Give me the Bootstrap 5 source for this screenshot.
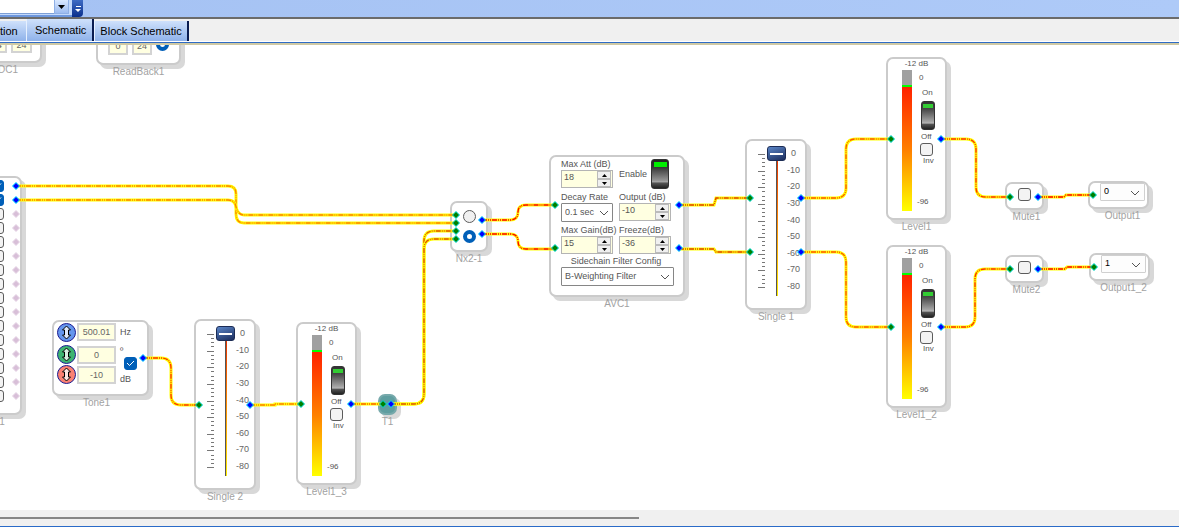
<!DOCTYPE html>
<html lang="en">
<head>
<meta charset="utf-8">
<meta name="viewport" content="width=device-width, initial-scale=1">
<title>Schematic</title>
<link href="https://cdn.jsdelivr.net/npm/bootstrap@5.3.0/dist/css/bootstrap.min.css" rel="stylesheet">
<style>
body{font-family:"Liberation Sans",Arial,sans-serif;font-size:9px;line-height:11px;color:#555;background:#fff}
button,input,select{font-family:inherit;font-size:9px;line-height:11px;color:#555}
/* toolbar and tabs */
.toolstrip{height:17px;background:linear-gradient(90deg,#a5c2f3,#aecaf8)}
.toolstrip .combo-wrap{width:72px;background:#c3d9fb;border-bottom:2px solid #6d97dd}
.combo-text{width:54px;height:14px;border:0;background:#fff;border-bottom:1px solid #7d9fd6}
.combo-btn{width:15px;height:14px;background:linear-gradient(#d9e8ff,#9dbcf0);border:1px solid #8fb0e6;border-top:0}
.more-btn{width:11px;background:linear-gradient(#3f6cc4,#0a2f8c);border:0;border-radius:0 0 4px 0}
.tabbar{height:25px;background:#f0f0f0;border-top:2px solid #6b6b6b;border-bottom:1px solid #fff}
.tab-item{height:20px;line-height:20px;font-size:11px;color:#000;background:linear-gradient(#cfe1fb,#8fb2ea);border:0;border-right:2px solid #0a1c50;border-left:1px solid #e6f0ff;border-radius:0;padding:0 5px}
.tab-item.active{height:22px;padding:0 6px 0 8px}
.tab-item:first-child{width:26px;border-left:0;border-right:0;padding:0}
.tab-rule{height:3px;background:#2f6bc4;border-bottom:2px solid #cfc9a4}
/* canvas */
.board{overflow:hidden;min-height:465px}
.board>svg{position:absolute;left:0;top:0;pointer-events:none}
.node{position:absolute;color:#999;font-size:9px}
.node>.body{background:#fff;border:2px solid #cbcbcb;border-radius:7px;box-shadow:4px 4px 0 #d8d8d8;color:#555;width:100%}
.node>.cap{white-space:nowrap;line-height:12px;margin-top:1px;font-size:10px;color:#a2a2a2}
.node.lv{width:61px}.node.lv>.body{height:163px}
.node.sl{width:62px}.node.sl>.body{height:171px}
.node.mu{width:39px}.node.mu>.body,.node.out>.body{height:28px}
.node.out{width:61px}
#adc{left:-42px;top:-44px;width:84px}#adc>.body,#rb>.body{height:62px}
#adc>.cap{padding-left:18px}#src>.cap{padding-left:42px}
#rb{left:96px;top:-42px;width:85px}
#src{left:-60px;top:131px;width:82px}#src>.body{height:239px}
#tone{left:52px;top:275px;width:97px}#tone>.body{height:76px}
#single2{left:194px;top:274px}#single1{left:745px;top:94px}
#level13{left:296px;top:277px}#level1{left:886px;top:12px}#level12{left:886px;top:200px}
#t1{left:378px;top:349px;width:19px}#t1>.body{height:21px;background:#5f9ea0;border-color:#76a9ab}
#nx{left:450px;top:156px;width:38px}#nx>.body{height:51px}
#avc{left:549px;top:110px;width:136px}#avc>.body{height:142px}
#mute1{left:1005px;top:137px}#mute2{left:1005px;top:210px}
#output1{left:1088px;top:136px}#output2{left:1089px;top:208px}
/* controls */
.field{background:#ffffe1;border:2px solid #d3d3d3;color:#666;text-align:center;padding:0;min-width:0}
.tick{appearance:none;width:13px;height:13px;border:1px solid #5c5c5c;border-radius:3px;background:#f3f3f3;margin:0;flex:none}
.tick:checked{border-color:#005fb8;background:#005fb8 url("data:image/svg+xml,%3Csvg xmlns='http://www.w3.org/2000/svg' viewBox='0 0 13 13'%3E%3Cpath d='M3 6l2.500 2.500L10 4' fill='none' stroke='white'/%3E%3C/svg%3E") center/13px no-repeat}
.tick.src{height:12px;margin-bottom:2px}
#srcList{padding-top:2px}
.dot{appearance:none;width:13px;height:13px;border:1px solid #5c5c5c;border-radius:50%;background:#f0f0f0;margin:0}
.dot:checked{background:#fff;border:4px solid #005fb8}
.pick{appearance:none;border:1px solid #868686;background:#fff url("data:image/svg+xml,%3Csvg xmlns='http://www.w3.org/2000/svg' viewBox='0 0 10 6'%3E%3Cpath d='M1 1l4 4 4-4' fill='none' stroke='%23555'/%3E%3C/svg%3E") right 3px center/10px 6px no-repeat;padding:0 14px 0 3px;height:19px;border-radius:1px}
.out .pick{width:45px;height:18px;border-color:#d0d0d0;color:#000;background-color:#fdfdfd;background-position:right 4px bottom 4px;margin:0 2px 0 0;padding-bottom:1px}
.spin{height:18px;border:1px solid #b4b4b4;background:#ffffe1}
.spin input{width:35px;border:0;background:none;padding:0 0 3px 2px;appearance:textfield}
.spin input::-webkit-inner-spin-button{display:none}
.spin button{padding:0;border:0;width:14px;height:8px;background:#f0f0f0;outline:1px solid #bbb;outline-offset:-1px}
.spin svg{display:block;margin:auto}
.avcgrid{display:grid;grid-template-columns:52px 52px;column-gap:6px;row-gap:3px;padding:2px 0 0 10px}
.avcgrid label{display:block;white-space:nowrap;line-height:11px}
.side{grid-column:1/3;margin-top:-1px}.side .pick{width:113px}
.rocker{border:1px solid #333;border-radius:3px;padding:0;width:14px;height:29px;background:linear-gradient(#3c3,#3c3) center 2px/10px 4px no-repeat,linear-gradient(#333,#444 25%,#aaa 75%,#bbb 78%,#555 82%,#222)}
.rocker.big{width:18px;height:30px;background:linear-gradient(#0e0,#0e0) center 2px/13px 5px no-repeat,linear-gradient(#222,#333 25%,#999 75%,#aaa 78%,#555 82%,#222)}
.meter{width:10px;height:141px;margin-left:14px;background:linear-gradient(#a0a0a0 15px,#0f0 15px,#0f0 17px,#f20 17px,#ff8000 80px,#ff0)}
.lvtext{font-size:8px;line-height:10px}
.lvtop{margin-top:1px}
.lvcol{width:26px;height:141px;margin-left:5px}
.top0{margin:3px 0 5px 2px}
.lvcol .on{margin-left:5px;margin-bottom:3px}
.lvcol .rocker{margin-left:4px}
.lvcol .off{margin:2px 0 1px 4px}
.lvcol .tick{margin-left:3px}
.lvcol .inv{margin-left:6px}
.scale{height:144px;margin-top:7px;width:15px;font-size:9px;line-height:11px;color:#666}
.ticks{margin:13px 0 0 11px}
.fader{appearance:none;writing-mode:vertical-lr;width:19px;height:150px;margin:5px 0 0 2px;padding:0;background:linear-gradient(#555,#555) 9px 0/1px 100% no-repeat,linear-gradient(#e02000,#f80 50%,#fe0) 10px 0/1px 100% no-repeat}
.fader::-webkit-slider-runnable-track{width:19px;height:100%}
.fader::-webkit-slider-thumb{appearance:none;width:19px;height:15px;border-radius:3px;border:1px solid #1c2c55;background:linear-gradient(#fff,#fff) center/13px 2px no-repeat,linear-gradient(160deg,#5b86c8,#1a2c5c)}
.knob{width:19px;height:19px;border:1px solid #1a1a90;border-radius:50%;padding:0}
.knob svg{display:block;margin:auto}
.knob:nth-child(2){margin:3px 0 1px}
.tone-row{padding:1px 3px}
.tone-in{width:39px;height:18px;margin-left:1px}
.tone-in:nth-child(2){margin-top:5px;margin-bottom:2px}
/* bottom scroll bar */
.hscroll{height:17px;background:#f0f0f0;border-bottom:1px solid #2a6bc8}
.hscroll .thumb{height:2px;width:54.2%;background:#868686}
</style>
</head>
<body class="d-flex flex-column min-vh-100">
<header>
  <div class="toolstrip d-flex">
    <div class="combo-wrap d-flex align-items-start">
      <input class="combo-text" aria-label="Selection">
      <button class="combo-btn p-0 d-flex align-items-center justify-content-center" aria-label="Open list"><svg width="7" height="4"><path d="M0 0h7L3.500 4z" fill="#000"/></svg></button>
    </div>
    <button class="more-btn p-0 d-flex align-items-end justify-content-center pb-1" aria-label="More"><svg width="8" height="8"><path d="M2 1.500h5" stroke="#fff"/><path d="M1 4h6L4 7z" fill="#fff"/></svg></button>
  </div>
  <nav class="tabbar d-flex align-items-end" role="tablist">
    <button class="tab-item text-start" role="tab">tion</button>
    <button class="tab-item active" role="tab" aria-selected="true">Schematic</button>
    <button class="tab-item" role="tab">Block Schematic</button>
  </nav>
  <div class="tab-rule"></div>
</header>

<main class="board position-relative flex-grow-1">
  <section class="node" id="adc"><div class="body d-flex justify-content-end align-items-end pb-1 pe-2"><input class="field mb-1 me-1" style="width:20px" value="24" aria-label="ADC first"><input class="field mb-1" style="width:21px" value="24" aria-label="ADC second"></div><div class="cap text-end pe-4">DC1</div></section>
  <section class="node" id="rb"><div class="body d-flex justify-content-center align-items-end gap-1 pb-2"><input class="field" style="width:20px;height:19px" value="0" aria-label="Read first"><input class="field" style="width:20px;height:19px" value="24" aria-label="Read second"><input type="radio" class="dot mb-1" checked aria-label="Read"></div><div class="cap text-center">ReadBack1</div></section>
  <section class="node" id="src"><div class="body d-flex flex-column align-items-end pe-3" id="srcList"></div><div class="cap text-center">1</div></section>

  <section class="node" id="tone"><div class="body d-flex tone-row">
    <div class="d-flex flex-column" id="knobs"></div>
    <div class="d-flex flex-column"><input class="field tone-in" value="500.01" aria-label="Frequency"><input class="field tone-in" value="0" aria-label="Phase"><input class="field tone-in" value="-10" aria-label="Gain"></div>
    <div class="d-flex flex-column ps-1"><span class="pt-1">Hz</span><span class="pt-2">º</span><input type="checkbox" class="tick ms-1" checked aria-label="Tone on"><span class="pt-1">dB</span></div>
  </div><div class="cap text-center pe-2">Tone1</div></section>

  <section class="node sl" id="single2" data-name="Single 2"></section>
  <section class="node sl" id="single1" data-name="Single 1"></section>
  <section class="node lv" id="level13" data-name="Level1_3"></section>
  <section class="node lv" id="level1" data-name="Level1"></section>
  <section class="node lv" id="level12" data-name="Level1_2"></section>

  <section class="node" id="t1"><div class="body"></div><div class="cap text-center">T1</div></section>
  <section class="node" id="nx"><div class="body d-flex flex-column align-items-center justify-content-around py-1"><input type="radio" class="dot" name="nx" aria-label="Input 1"><input type="radio" class="dot" name="nx" checked aria-label="Input 2"></div><div class="cap text-center">Nx2-1</div></section>

  <section class="node" id="avc"><div class="body"><div class="avcgrid">
    <div data-spin="Max Att (dB)" data-val="18"></div>
    <div class="d-flex align-items-center"><label for="en">Enable</label><button class="rocker big ms-1 flex-shrink-0" id="en" aria-label="Enable"></button></div>
    <div><label for="decay">Decay Rate</label><select class="pick w-100" id="decay"><option>0.1 sec</option></select></div>
    <div data-spin="Output (dB)" data-val="-10"></div>
    <div data-spin="Max Gain(dB)" data-val="15"></div>
    <div data-spin="Freeze(dB)" data-val="-36"></div>
    <div class="side"><label class="text-center" for="side">Sidechain Filter Config</label><select class="pick" id="side"><option>B-Weighting Filter</option></select></div>
  </div></div><div class="cap text-center">AVC1</div></section>

  <section class="node mu" id="mute1"><div class="body d-flex justify-content-center pt-1"><input type="checkbox" class="tick" aria-label="Mute1"></div><div class="cap text-center ps-1">Mute1</div></section>
  <section class="node mu" id="mute2"><div class="body d-flex justify-content-center pt-1"><input type="checkbox" class="tick" aria-label="Mute2"></div><div class="cap text-center ps-1">Mute2</div></section>
  <section class="node out" id="output1"><div class="body d-flex justify-content-end"><select class="pick" aria-label="Output1"><option>0</option></select></div><div class="cap text-center ps-2">Output1</div></section>
  <section class="node out" id="output2"><div class="body d-flex justify-content-end"><select class="pick" aria-label="Output1_2"><option>1</option></select></div><div class="cap text-center ps-2">Output1_2</div></section>

  <svg width="100%" height="100%" fill="none" aria-hidden="true"><g id="wires" transform="translate(0,-45)"></g><g id="ports" transform="translate(0,-45)"></g></svg>
</main>

<footer class="hscroll d-flex align-items-center"><div class="thumb"></div></footer>

<script src="https://cdn.jsdelivr.net/npm/bootstrap@5.3.0/dist/js/bootstrap.bundle.min.js"></script>
<script>
// Wires: path and colour of the dash-dot core
const wires = [
  ['M16 186H228Q236 186 236 194V214Q236 223 244 223H456','#ff8000'],
  ['M16 200H228Q235 200 236 207Q238 215 244 215H456','#ff8000'],
  ['M391 404H414Q424 404 424 394V241Q424 231 434 231H456','#e05000'],
  ['M391 404H414Q424 404 424 394V249Q424 239 434 239H456','#e05000'],
  ['M482 220H510Q518 220 518 212Q518 205 526 205H555','#f00'],
  ['M482 234H510Q518 234 518 241Q518 249 526 249H555','#f00'],
  ['M679 205H714L716 198H750','#e04000'],
  ['M679 249H714L716 252H750','#e04000'],
  ['M801 198H836Q846 198 846 188V149Q846 139 856 139H891','#f50'],
  ['M801 252H836Q846 252 846 262V317Q846 327 856 327H891','#f50'],
  ['M941 139H966Q976 139 976 149V187Q976 197 986 197H1010','#f30'],
  ['M941 327H965Q975 327 975 317V279Q975 269 985 269H1010','#f30'],
  ['M1038 197H1064L1066 195H1093','#f00'],
  ['M1038 269H1065L1067 267H1094','#f00'],
  ['M143 358H161Q171 358 171 368V395Q171 405 181 405H199','#f30'],
  ['M250 405H275V404H301','#ff8000'],
  ['M351 404H383','#ff6000']];
document.getElementById('wires').innerHTML = wires.map(([d,c]) =>
  `<path d="${d}" stroke="#ff0" stroke-width="3"/><path d="${d}" stroke="${c}" stroke-width="1.400" stroke-dasharray="5 1 1 1 1 1"/>`).join('');

// Ports: green inputs, blue outputs, pale unused outputs
const green = [[456,215],[456,223],[456,231],[456,239],[555,205],[555,248],[750,198],[750,252],[891,139],[891,327],[1010,197],[1010,269],[1093,195],[1094,267],[199,405],[301,404],[383,404]];
const blue = [[16,186],[16,200],[482,220],[482,234],[679,205],[679,248],[801,198],[801,252],[941,139],[941,327],[1038,197],[1038,269],[143,358],[250,405],[351,404],[391,404]];
const pale = Array.from({length:14},(_,i)=>[16,214+14*i]);
const port = (x,y,f,s) => `<path d="M${x-3.5} ${y}l3.500-3.500 3.500 3.500-3.500 3.500z" fill="${f}" stroke="${s}" stroke-width="1"/>`;
document.getElementById('ports').innerHTML =
  pale.map(p=>port(...p,'#d8bfd8','#e6d6e6')).join('') + green.map(p=>port(...p,'#008000','#00e0e0')).join('') + blue.map(p=>port(...p,'#00f','#00e8ff')).join('');

// Output switches of the source block
document.getElementById('srcList').innerHTML = Array.from({length:16},(_,i)=>`<input type="checkbox" class="tick src" ${i<2?'checked':''} aria-label="Source ${i+1}">`).join('');

// Level blocks
document.querySelectorAll('.lv').forEach(n => {
  const k = n.id, name = n.dataset.name;
  n.innerHTML = `<div class="body"><div class="lvtext text-center">-12 dB</div><div class="d-flex lvtop">
    <div class="meter"></div>
    <div class="lvcol lvtext d-flex flex-column">
      <span class="top0">0</span><span class="on">On</span>
      <button class="rocker" aria-label="${name} switch"></button>
      <span class="off">Off</span>
      <input type="checkbox" class="tick" id="${k}i"><label for="${k}i" class="inv">Inv</label>
      <span class="mt-auto mb-1">-96</span>
    </div></div></div><div class="cap text-center">${name}</div>`;
});

// Fader blocks: a short tick every quarter of 10 dB
document.querySelectorAll('.sl').forEach(n => {
  let d = '';
  for (let i = 0; i <= 32; i++) d += `M${i%4?4:0} ${Math.round(i*133/32)+.5}H7`;
  n.innerHTML = `<div class="body d-flex"><svg class="ticks" width="7" height="135"><path d="${d}" stroke="#777"/></svg>
    <input type="range" class="fader" min="0" max="80" value="0" aria-label="${n.dataset.name}">
    <div class="scale d-flex flex-column justify-content-between">${[0,10,20,30,40,50,60,70,80].map(v=>`<span class="text-center">${v?-v:0}</span>`).join('')}</div></div>
    <div class="cap text-center">${n.dataset.name}</div>`;
});

// Number boxes with up and down buttons
document.querySelectorAll('[data-spin]').forEach((n,i) => {
  const b = (d,l) => `<button aria-label="${l}"><svg width="5" height="3"><path d="${d}" fill="#000"/></svg></button>`;
  n.innerHTML = `<label for="s${i}">${n.dataset.spin}</label><div class="spin d-flex"><input type="number" id="s${i}" value="${n.dataset.val}"><div class="d-flex flex-column">${b('M0 3h5L2.500 0z','Up')}${b('M0 0h5L2.500 3z','Down')}</div></div>`;
});

// Tone knobs
document.getElementById('knobs').innerHTML = [['#6495ed','Frequency'],['#3cb371','Phase'],['#fa8072','Gain']].map(([c,l]) =>
  `<button class="knob" style="background:${c}" aria-label="${l} knob"><svg width="11" height="15" viewBox="0 0 11 15"><path d="M5.500 1L9.500 5H7.500V10H9.500L5.500 14 1.500 10H3.500V5H1.500Z" fill="#fff" fill-opacity=".8" stroke="#000"/></svg></button>`).join('');
</script>
</body>
</html>
